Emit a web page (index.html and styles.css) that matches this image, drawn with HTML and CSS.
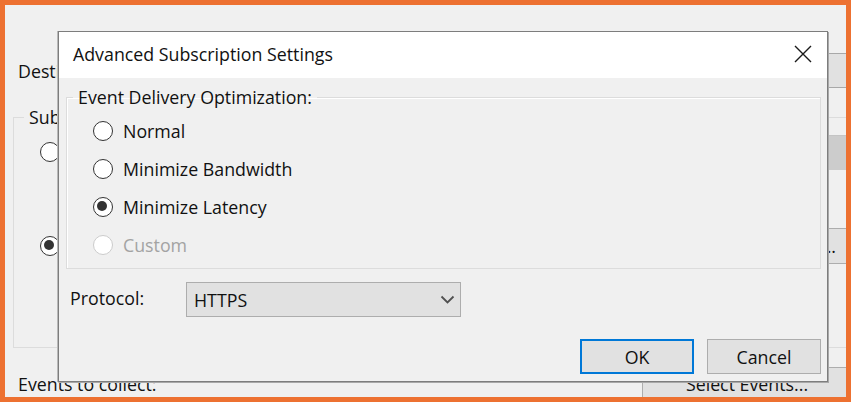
FILE: index.html
```html
<!DOCTYPE html>
<html>
<head>
<meta charset="utf-8">
<link rel="stylesheet" href="styles.css">
</head>
<body>
<div class="frame">
  <div class="window">
    <div class="win-row dest-row">
      <span class="win-label">Destination log:</span>
      <div class="win-box"></div>
    </div>
    <fieldset class="win-group">
      <legend>Subscription type and source computers</legend>
      <div class="win-opt opt-a">
        <span class="radio"></span>
        <div class="win-disabled"></div>
      </div>
      <div class="win-opt opt-b">
        <span class="radio checked"></span>
        <div class="win-btn small">...</div>
      </div>
    </fieldset>
    <div class="win-row events-row">
      <span class="win-label">Events to collect:</span>
      <div class="win-btn select">Select Events...</div>
    </div>
  </div>

  <div class="dialog">
    <div class="titlebar">
      <span class="title">Advanced Subscription Settings</span>
      <svg class="close" width="18" height="18" viewBox="0 0 18 18">
        <path d="M1 1 L17 17 M17 1 L1 17" stroke="#1a1a1a" stroke-width="1.4" fill="none"/>
      </svg>
    </div>
    <div class="body">
      <fieldset class="group">
        <legend>Event Delivery Optimization:</legend>
        <label class="opt"><span class="radio"></span><span>Normal</span></label>
        <label class="opt"><span class="radio"></span><span>Minimize Bandwidth</span></label>
        <label class="opt"><span class="radio checked"></span><span>Minimize Latency</span></label>
        <label class="opt disabled"><span class="radio"></span><span>Custom</span></label>
      </fieldset>
      <div class="proto-row">
        <span class="proto-label">Protocol:</span>
        <div class="combo">
          <span>HTTPS</span>
          <svg width="15" height="9" viewBox="0 0 15 9"><path d="M1.5 1.5 L7.5 7.5 L13.5 1.5" stroke="#505050" stroke-width="1.8" fill="none"/></svg>
        </div>
      </div>
      <div class="buttons">
        <div class="btn default">OK</div>
        <div class="btn">Cancel</div>
      </div>
    </div>
  </div>
</div>
</body>
</html>
```
FILE: styles.css
```css
* { box-sizing: border-box; }
html, body { margin: 0; padding: 0; background: #ffffff; }
body {
  font-family: "Open Sans", "Noto Sans", "Liberation Sans", sans-serif;
  font-size: 17.8px;
  color: #111;
}
.frame {
  position: relative;
  width: 851px;
  height: 402px;
  border: 5px solid #ed7131;
  background: #f0f0f0;
  overflow: hidden;
}
.window {
  width: 900px;
  padding-left: 8px;
}
.win-row { display: flex; align-items: center; }
.dest-row { margin-top: 48px; height: 35px; }
.win-label { padding-left: 5px; }
.dest-row .win-box {
  margin-left: auto;
  margin-right: -31px;
  width: 136px;
  height: 35px;
  background: #e1e1e1;
  border: 1px solid #a8a8a8;
}
.win-group {
  margin: 19px 0 0 0;
  padding: 0;
  width: 960px;
  height: 241px;
  border: 1px solid #dcdcdc;
  display: flex;
  flex-direction: column;
}
.win-group legend {
  margin-left: 10px;
  padding: 0 5px;
  line-height: 20px;
}
.win-opt { display: flex; align-items: center; padding-left: 26px; }
.opt-a { height: 36px; margin-top: 7px; }
.opt-b { height: 36px; margin-top: 58px; }
.win-disabled { margin-left: 740px; width: 100px; height: 35px; background: #cccccc; border-top: 1px solid #c4c4c4; }
.win-btn {
  background: #e1e1e1;
  border: 1px solid #adadad;
  display: flex;
  align-items: center;
  justify-content: center;
}
.win-btn.small { margin-left: 740px; width: 80px; height: 36px; justify-content: flex-start; padding-left: 21px; }
.events-row { margin-top: 19px; height: 34px; align-items: flex-end; }
.events-row .win-label { margin-bottom: 7px; line-height: 20px; }
.win-btn.select { margin-left: auto; margin-right: 43px; width: 220px; height: 34px; padding-right: 10px; }

.dialog {
  position: absolute;
  left: 53px;
  top: 26px;
  width: 770px;
  height: 351px;
  background: #f0f0f0;
  border: 1px solid #7d7d7d;
  box-shadow: 1px 1px 0 #a8a8a8, -1px 0 0 #b8b8b8;
  display: flex;
  flex-direction: column;
}
.titlebar {
  height: 46px;
  background: #ffffff;
  display: flex;
  align-items: center;
  padding: 0 15px 0 14px;
  flex: none;
}
.title { margin-top: -2px; }
.close { margin-left: auto; margin-top: -3px; }
.body {
  flex: 1;
  padding: 0 6px 7px 7px;
  display: flex;
  flex-direction: column;
}
.group {
  margin: 9px 0 0 0;
  padding: 5px 0 4px 0;
  border: 1px solid #dcdcdc;
  box-shadow: inset 1px 1px 0 #ffffff;
}
.group legend {
  margin-left: 6px;
  padding: 0 5px;
  line-height: 20px;
}
.opt {
  height: 38px;
  display: flex;
  align-items: center;
  gap: 10px;
  padding-left: 26px;
}
.radio {
  width: 20px;
  height: 20px;
  border-radius: 50%;
  border: 1.6px solid #333;
  background: #fff;
  flex: none;
  position: relative;
}
.radio.checked::after {
  content: "";
  position: absolute;
  left: 3.4px;
  top: 3.4px;
  width: 10px;
  height: 10px;
  border-radius: 50%;
  background: #333;
}
.opt.disabled { color: #a3a3a3; }
.opt.disabled .radio { border-color: #cccccc; }
.proto-row {
  margin-top: 13px;
  height: 35px;
  display: flex;
  align-items: center;
  padding-left: 4px;
}
.proto-label { width: 116px; margin-top: -4px; }
.combo {
  width: 275px;
  height: 35px;
  background: #e1e1e1;
  border: 1px solid #adadad;
  display: flex;
  align-items: center;
  justify-content: space-between;
  padding: 0 5px 0 7px;
}
.buttons {
  margin-top: auto;
  display: flex;
  justify-content: flex-end;
  gap: 13px;
}
.btn {
  width: 114px;
  height: 35px;
  background: #e1e1e1;
  border: 1px solid #adadad;
  display: flex;
  align-items: center;
  justify-content: center;
}
.btn.default { border: 2px solid #0078d7; }
```
